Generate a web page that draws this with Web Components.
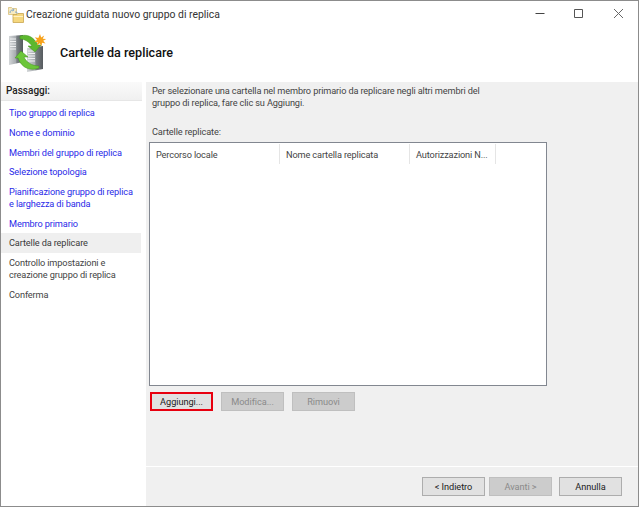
<!DOCTYPE html>
<html lang="it">
<head>
<meta charset="utf-8">
<title>Creazione guidata</title>
<style>
html, body { margin: 0; padding: 0; background: #fff; }
body { font: 10px Roboto, "Liberation Sans", sans-serif; color: #333; }
</style>
</head>
<body>
<wizard-window>
    <wizard-sidebar slot="side">
        <wizard-step link>Tipo gruppo di replica</wizard-step>
        <wizard-step link>Nome e dominio</wizard-step>
        <wizard-step link>Membri del gruppo di replica</wizard-step>
        <wizard-step link>Selezione topologia</wizard-step>
        <wizard-step link>Pianificazione gruppo di replica<br>e larghezza di banda</wizard-step>
        <wizard-step link>Membro primario</wizard-step>
        <wizard-step current>Cartelle da replicare</wizard-step>
        <wizard-step>Controllo impostazioni e<br>creazione gruppo di replica</wizard-step>
        <wizard-step>Conferma</wizard-step>
    </wizard-sidebar>
    <folder-panel slot="main"></folder-panel>
</wizard-window>

<script>
// bottone stile Windows
class WinButton extends HTMLElement {
    constructor() {
        super();
        this.attachShadow({ mode: "open" });
        this.shadowRoot.innerHTML = `
            <style>
                :host {
                    display: flex;
                    align-items: center;
                    justify-content: center;
                    box-sizing: border-box;
                    width: 63px;
                    height: 19px;
                    background: #e1e1e1;
                    border: 1px solid #adadad;
                    color: #222;
                    font-size: 9.2px;
                    letter-spacing: -.05px;
                }
                :host([disabled]) {
                    background: #cccccc;
                    border-color: #bfbfbf;
                    color: #8a8a8a;
                }
                :host([marked]) {
                    outline: 2px solid #e8000f;
                    outline-offset: -2px;
                }
            </style>
            <slot></slot>
        `;
    }
}

class WizardStep extends HTMLElement {
    constructor() {
        super();
        this.attachShadow({ mode: "open" });
        this.shadowRoot.innerHTML = `
            <style>
                :host {
                    display: block;
                    padding: 4px 0 4px 8px;
                    line-height: 11.7px;
                    font-size: 9.2px;
                    letter-spacing: -.13px;
                    color: #444;
                }
                :host([link]) { color: #2a2ae8; }
                :host([current]) { background: #efefef; color: #3a3a3a; margin-right: 1px; }
            </style>
            <slot></slot>
        `;
    }
}

class WizardSidebar extends HTMLElement {
    constructor() {
        super();
        this.attachShadow({ mode: "open" });
        this.shadowRoot.innerHTML = `
            <style>
                :host {
                    display: block;
                    width: 141px;
                    background: #fff;
                }
                .head {
                    height: 19px;
                    box-sizing: border-box;
                    padding: 3px 0 0 5px;
                    font-size: 10px;
                    font-weight: 500;
                    color: #222;
                    background: linear-gradient(#fafafa, #f0f0f0);
                    border-bottom: 1px solid #e6e6e6;
                }
                .steps {
                    display: flex;
                    flex-direction: column;
                    gap: .1px;
                    padding-top: 2px;
                }
            </style>
            <div class="head">Passaggi:</div>
            <div class="steps"><slot></slot></div>
        `;
    }
}

class FolderPanel extends HTMLElement {
    constructor() {
        super();
        this.attachShadow({ mode: "open" });
        this.shadowRoot.innerHTML = `
            <style>
                :host {
                    display: flex;
                    flex-direction: column;
                    height: 100%;
                    box-sizing: border-box;
                    padding: 3px 0 0 3px;
                    font-size: 9.2px;
                    letter-spacing: -.13px;
                    color: #444;
                }
                p { margin: 0 0 0 3px; line-height: 12px; width: 340px; }
                .label { margin: 17px 0 4px 3px; line-height: 12px; }
                .list {
                    width: 398px;
                    height: 244px;
                    box-sizing: border-box;
                    background: #fff;
                    border: 1px solid #828790;
                }
                .cols { display: flex; height: 20px; margin-top: 1px; }
                .cols div {
                    box-sizing: border-box;
                    padding: 5px 0 0 6px;
                    width: 130px;
                    border-right: 1px solid #e5e5e5;
                    white-space: nowrap;
                }
                .cols div:last-child { width: 86px; }
                .buttons { display: flex; gap: 8px; margin: 6px 0 0 1px; }
            </style>
            <p>Per selezionare una cartella nel membro primario da replicare negli altri membri del gruppo di replica, fare clic su Aggiungi.</p>
            <div class="label">Cartelle replicate:</div>
            <div class="list">
                <div class="cols">
                    <div>Percorso locale</div>
                    <div>Nome cartella replicata</div>
                    <div>Autorizzazioni N...</div>
                </div>
            </div>
            <div class="buttons">
                <win-button marked>Aggiungi...</win-button>
                <win-button disabled>Modifica...</win-button>
                <win-button disabled>Rimuovi</win-button>
            </div>
        `;
    }
}

class WizardWindow extends HTMLElement {
    constructor() {
        super();
        this.attachShadow({ mode: "open" });
        this.shadowRoot.innerHTML = `
            <style>
                :host {
                    display: flex;
                    flex-direction: column;
                    box-sizing: border-box;
                    width: 639px;
                    height: 507px;
                    background: #fff;
                    border: 1px solid #8c8c8c;
                }
                .title {
                    display: flex;
                    align-items: center;
                    height: 27px;
                    flex: none;
                    padding-left: 7px;
                    gap: 2px;
                    font-size: 10.4px;
                    color: #333;
                }
                .title span { flex: 1; }
                .ctl { display: flex; flex: none; }
                .ctl svg { display: block; width: 39.5px; height: 27px; }
                .head {
                    display: flex;
                    align-items: center;
                    height: 51px;
                    flex: none;
                    box-sizing: border-box;
                    padding: 0 0 2px 7px;
                    gap: 13px;
                    font-size: 12.6px;
                    font-weight: 500;
                    color: #111;
                }
                .body {
                    display: flex;
                    flex: 1;
                    min-height: 0;
                    gap: 4px;
                    padding-top: 3px;
                }
                .main {
                    flex: 1;
                    background: #f0f0f0;
                    display: flex;
                    flex-direction: column;
                    min-width: 0;
                }
                .content { flex: 1; min-height: 0; }
                .foot {
                    display: flex;
                    justify-content: flex-end;
                    gap: 4px;
                    height: 40px;
                    flex: none;
                    box-sizing: border-box;
                    padding: 10px 16px 0 0;
                    border-top: 1px solid #fff;
                }
                .foot win-button:last-child { margin-left: 3px; }
                ::slotted([slot="main"]) { display: flex; }
            </style>
            <div class="title">
                <svg width="16" height="17" viewBox="0 0 16 17">
                    <!-- cartella dietro -->
                    <path d="M.5 3.500V1.500h3l1 1h4v6h-8z" fill="#f8ebc0" stroke="#d8bf7a" stroke-width=".8"/>
                    <path d="M2 7c0-2 1-3 3-3M5 2.500l1 1.500-1.500 1" fill="none" stroke="#7fa6cc" stroke-width="1"/>
                    <path d="M7 6c2 0 3 1 3 3" fill="none" stroke="#7fa6cc" stroke-width="1"/>
                    <!-- cartella davanti -->
                    <path d="M5 8.500h4l1-1h5.500v9H5z" fill="#f5d77e" stroke="#c9a650" stroke-width=".8"/>
                    <path d="M5.500 10.500h9.500" stroke="#fff1c4" stroke-width="1"/>
                </svg>
                <span>Creazione guidata nuovo gruppo di replica</span>
                <div class="ctl">
                    <svg viewBox="0 0 39.5 27"><path d="M15.500 12.500h9" stroke="#444" fill="none"/></svg>
                    <svg viewBox="0 0 39.5 27"><path d="M15.500 8.500h8v8h-8z" stroke="#555" fill="none"/></svg>
                    <svg viewBox="0 0 39.5 27"><path d="M15 8l9 9M24 8l-9 9" stroke="#666" fill="none"/></svg>
                </div>
            </div>
            <div class="head">
                <svg width="39" height="40" viewBox="0 0 39 40">
                    <defs>
                        <linearGradient id="srv" x1="0" x2="1" y1="0" y2="0">
                            <stop offset="0" stop-color="#d3d6d8"/>
                            <stop offset=".5" stop-color="#a4a9ad"/>
                            <stop offset=".55" stop-color="#7a8084"/>
                            <stop offset="1" stop-color="#565b5f"/>
                        </linearGradient>
                    </defs>
                    <path d="M1 3l14-1v27l-14 3z" fill="url(#srv)"/>
                    <path d="M2 6h6M2 8.500h6M2 11h6M2 13.500h6M2 16h6" stroke="#f0f1f2" stroke-width="1"/>
                    <path d="M19 15l16-2v23l-16 3z" fill="url(#srv)"/>
                    <path d="M20 18h7M20 20.500h7M20 23h7M20 25.500h7M20 28h7" stroke="#f0f1f2" stroke-width="1"/>
                    <path d="M12 3c7-2 13 0 18 9h3l-6 7-7-6h4c-3-4-7-7-12-7z" fill="#5cb82e" stroke="#3f8f1c" stroke-width=".5"/>
                    <path d="M31 35c-8 3-17 1-21-10H7l6-7 7 6h-4c2 5 8 9 15 9z" fill="#6cc63a" stroke="#3f8f1c" stroke-width=".5"/>
                    <path d="M32 1l1.200 3.500 3-2-1.500 3.200 3.500.3-3 1.800 2.300 2.600-3.500-.6-.4 3.500-2-3-2.800 2.200.8-3.400-3.500-.4 3-1.800-2.300-2.700 3.500.7z" fill="#f7a21b"/>
                </svg>
                <span>Cartelle da replicare</span>
            </div>
            <div class="body">
                <slot name="side"></slot>
                <div class="main">
                    <div class="content"><slot name="main"></slot></div>
                    <div class="foot">
                        <win-button>&lt; Indietro</win-button>
                        <win-button disabled>Avanti &gt;</win-button>
                        <win-button>Annulla</win-button>
                    </div>
                </div>
            </div>
        `;
    }
}

customElements.define("win-button", WinButton);
customElements.define("wizard-step", WizardStep);
customElements.define("wizard-sidebar", WizardSidebar);
customElements.define("folder-panel", FolderPanel);
customElements.define("wizard-window", WizardWindow);
</script>
</body>
</html>
